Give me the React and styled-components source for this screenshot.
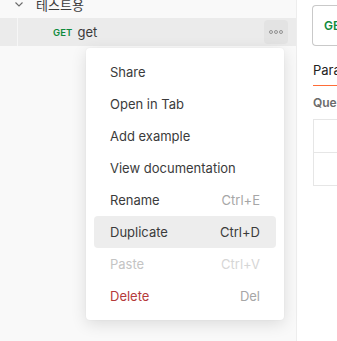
import React from 'react'
import styled, { createGlobalStyle } from 'styled-components'

const GlobalStyle = createGlobalStyle`
  html, body, #root {
    margin: 0;
    height: 100%;
  }
  body {
    font-family: Inter, "Noto Sans CJK KR", "Noto Sans", sans-serif;
    overflow: hidden;
    background: #ffffff;
  }
`

const menuItems = [
  { label: 'Share' },
  { label: 'Open in Tab' },
  { label: 'Add example' },
  { label: 'View documentation' },
  { label: 'Rename', shortcut: 'Ctrl+E' },
  { label: 'Duplicate', shortcut: 'Ctrl+D', active: true },
  { label: 'Paste', shortcut: 'Ctrl+V', disabled: true },
  { label: 'Delete', shortcut: 'Del', danger: true },
]

const App = () => {
  return (
    <>
      <GlobalStyle />
      <Page>
        <Sidebar>
          <Tree>
            <FolderRow>
              <Chevron viewBox="0 0 12 12">
                <path d="M2.5 4.5 L6 8 L9.5 4.5" fill="none" stroke="#6b6b6b" strokeWidth="1.1" />
              </Chevron>
              <FolderName>테스트용</FolderName>
            </FolderRow>
            <RequestRow>
              <Guide />
              <Method>GET</Method>
              <RequestName>get</RequestName>
              <DotsButton>
                <svg width="14" height="4" viewBox="0 0 14 4">
                  <circle cx="2" cy="2" r="1.5" fill="none" stroke="#8a8a8a" strokeWidth="0.9" />
                  <circle cx="7" cy="2" r="1.5" fill="none" stroke="#8a8a8a" strokeWidth="0.9" />
                  <circle cx="12" cy="2" r="1.5" fill="none" stroke="#8a8a8a" strokeWidth="0.9" />
                </svg>
              </DotsButton>
            </RequestRow>
          </Tree>

          <Menu>
            {menuItems.map((item) => (
              <MenuItem key={item.label} $active={item.active}>
                <ItemLabel $disabled={item.disabled} $danger={item.danger}>
                  {item.label}
                </ItemLabel>
                {item.shortcut && (
                  <Shortcut $active={item.active} $disabled={item.disabled}>
                    {item.shortcut}
                  </Shortcut>
                )}
              </MenuItem>
            ))}
          </Menu>
        </Sidebar>

        <Main>
          <UrlBox>
            <UrlMethod>GET</UrlMethod>
          </UrlBox>
          <Tabs>
            <Tab>Params</Tab>
          </Tabs>
          <SectionTitle>Query Params</SectionTitle>
          <Table>
            <TableRow />
            <TableRow />
          </Table>
        </Main>
      </Page>
    </>
  )
}

export default App

const Page = styled.div`
  display: flex;
  height: 341px;
  width: 337px;
`

const Sidebar = styled.div`
  position: relative;
  width: 296px;
  flex-shrink: 0;
  background: #f9f9f9;
  border-right: 1px solid #ededed;
`

const Tree = styled.div`
  display: flex;
  flex-direction: column;
  margin-top: -10px;
`

const FolderRow = styled.div`
  display: flex;
  align-items: center;
  height: 28px;
  padding-left: 13px;
`

const Chevron = styled.svg`
  width: 12px;
  height: 12px;
  margin-right: 11px;
`

const FolderName = styled.span`
  font-size: 13px;
  color: #3b3b3b;
`

const RequestRow = styled.div`
  display: flex;
  align-items: center;
  height: 28px;
  background: #ebebeb;
  padding-left: 17px;
  padding-right: 8px;
`

const Guide = styled.div`
  width: 1px;
  align-self: stretch;
  background: #f6f6f6;
  margin-right: 35px;
`

const Method = styled.span`
  font-size: 9.5px;
  font-weight: 600;
  color: #0f8a3c;
  margin-right: 5px;
  letter-spacing: 0.1px;
`

const RequestName = styled.span`
  font-size: 13px;
  color: #3b3b3b;
  flex: 1;
`

const DotsButton = styled.div`
  width: 24px;
  height: 24px;
  border-radius: 4px;
  background: #e3e3e3;
  display: flex;
  align-items: center;
  justify-content: center;
`

const Menu = styled.div`
  position: absolute;
  left: 86px;
  top: 48px;
  width: 198px;
  padding: 8px;
  box-sizing: border-box;
  background: #ffffff;
  border-radius: 4px;
  box-shadow: 0 4px 16px rgba(0, 0, 0, 0.12), 0 0 2px rgba(0, 0, 0, 0.06);
  display: flex;
  flex-direction: column;
`

const MenuItem = styled.div`
  display: flex;
  align-items: center;
  justify-content: space-between;
  height: 32px;
  padding: 0 16px;
  border-radius: 4px;
  background: ${(p) => (p.$active ? '#ededed' : 'transparent')};
`

const ItemLabel = styled.span`
  font-size: 13px;
  color: ${(p) => (p.$disabled ? '#c4c4c4' : p.$danger ? '#b53a3a' : '#3b3b3b')};
`

const Shortcut = styled.span`
  font-size: 13px;
  color: ${(p) => (p.$disabled ? '#d6d6d6' : p.$active ? '#3b3b3b' : '#a6a6a6')};
`

const Main = styled.div`
  flex: 1;
  padding: 5px 0 0 15px;
  display: flex;
  flex-direction: column;
  overflow: hidden;
`

const UrlBox = styled.div`
  height: 41px;
  box-sizing: border-box;
  border: 1px solid #c9c9c9;
  border-right: none;
  border-radius: 4px 0 0 4px;
  display: flex;
  align-items: center;
  padding-left: 11px;
  width: 60px;
`

const UrlMethod = styled.span`
  font-size: 12px;
  font-weight: 600;
  color: #0f8a3c;
`

const Tabs = styled.div`
  display: flex;
  margin-top: 16px;
  margin-left: 1px;
`

const Tab = styled.span`
  font-size: 13px;
  color: #212121;
  padding-bottom: 7px;
  border-bottom: 1px solid #ff6c37;
  white-space: nowrap;
`

const SectionTitle = styled.div`
  margin-top: 9px;
  margin-left: 1px;
  font-size: 12px;
  font-weight: 600;
  color: #6b6b6b;
  white-space: nowrap;
`

const Table = styled.div`
  margin-top: 9px;
  margin-left: 1px;
  width: 60px;
  border: 1px solid #e6e6e6;
  border-right: none;
  display: flex;
  flex-direction: column;
`

const TableRow = styled.div`
  height: 32px;
  & + & {
    border-top: 1px solid #e6e6e6;
  }
`
